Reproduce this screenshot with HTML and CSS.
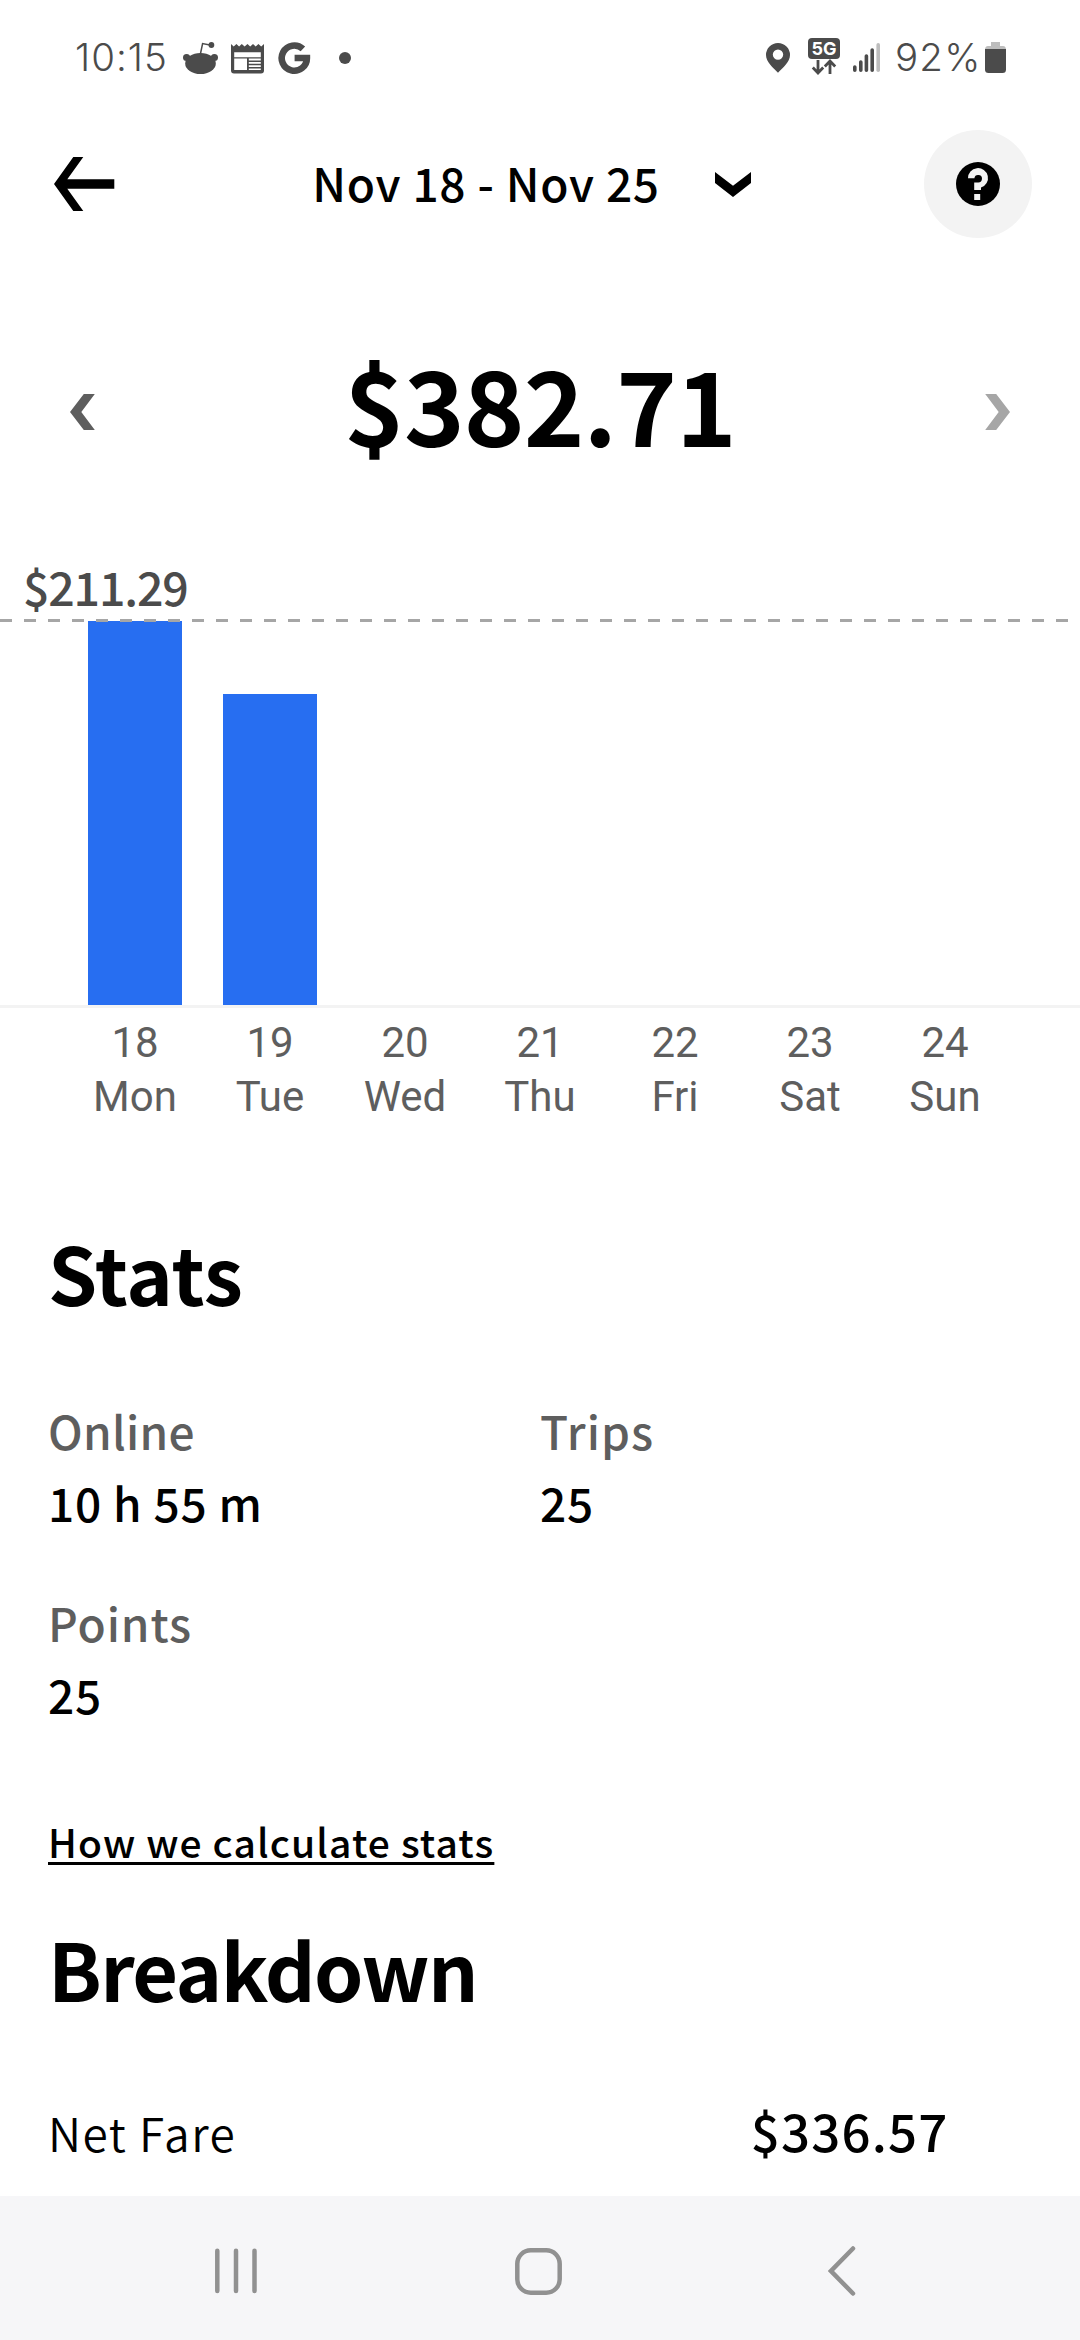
FILE: index.html
```html
<!DOCTYPE html>
<html lang="en">
<head>
<meta charset="utf-8">
<title>Earnings</title>
<link rel="stylesheet" href="styles.css">
</head>
<body>
<div class="screen">
  <div class="status">
    <span class="clock">10:15</span>
    <svg class="ico-reddit" width="36" height="34" viewBox="0 0 36 34">
      <ellipse cx="17.5" cy="21.5" rx="15.3" ry="10.5"/>
      <circle cx="3.6" cy="15.5" r="3.6"/><circle cx="31.4" cy="15.5" r="3.6"/>
      <circle cx="28.4" cy="3" r="2.9"/>
      <path class="line" d="M17.4 12 19.6 1.6 28 3.2"/>
    </svg>
    <svg class="ico-news" width="33" height="30" viewBox="0 0 33 30">
      <path fill-rule="evenodd" d="M0 0 2.7 2.6 5.4 0 8.1 2.6 10.8 0 13.6 2.6 16.5 0 19.2 2.6 22 0 24.7 2.6 27.4 0 30.2 2.6 33 0V26.5Q33 29.5 30 29.5H3Q0 29.5 0 26.5ZM3.2 8.2V13.2H29.8V8.2ZM3.2 14.6V26H16V14.6ZM17.8 14.6V16.4H29.8V14.6ZM17.8 18V19.8H29.8V18ZM17.8 21.2V23H29.8V21.2ZM17.8 24.4V26H29.8V24.4Z"/>
    </svg>
    <svg class="ico-g" width="33" height="34" viewBox="0 0 33 34">
      <path d="M24.9 7.9A12.6 12.6 0 1 0 28.9 17H16.6"/>
    </svg>
    <span class="dot"></span>
    <svg class="ico-pin" width="24" height="30" viewBox="0 0 24 30">
      <path fill-rule="evenodd" d="M12 0A12 12 0 0 1 24 12C24 19 17 24.5 12 29.8 7 24.5 0 19 0 12A12 12 0 0 1 12 0ZM12 6.4A5.2 5.2 0 1 0 12 16.8 5.2 5.2 0 1 0 12 6.4Z"/>
    </svg>
    <svg class="ico-5g" width="32" height="37" viewBox="0 0 32 37">
      <rect width="32" height="21" rx="4"/>
      <text x="16" y="17.2" text-anchor="middle">5G</text>
      <path d="M10 22V34.5M4.8 29.5 10 35 15.2 29.5M22 36V23.5M16.8 28.5 22 23 27.2 28.5"/>
    </svg>
    <svg class="ico-signal" width="27" height="30" viewBox="0 0 27 30">
      <path d="M1.8 24V27.2M7.8 19V27.2M13.4 13V27.2M19.2 7V27.2"/><path class="dim" d="M25.2 1.8V27.2"/>
    </svg>
    <span class="percent">92%</span>
    <svg class="ico-battery" width="21" height="31" viewBox="0 0 21 31">
      <path class="dim" d="M6 0H15V4H18Q21 4 21 8H0Q0 4 3 4H6Z"/><path d="M0 7H21V27.5Q21 31 17.5 31H3.5Q0 31 0 27.5Z"/>
    </svg>
  </div>

  <div class="header">
    <svg class="back" width="61" height="54" viewBox="0 0 61 54">
      <path d="M19.3 0H29.3L13.3 22.3H60.3V31.7H13.3L29.3 54H19.3L0 27Z"/>
    </svg>
    <h1 class="range">Nov 18 - Nov 25</h1>
    <svg class="drop" width="36" height="25" viewBox="0 0 36 25"><path d="M0 0 18 13.7 36 0V11L18 25 0 11Z"/></svg>
    <div class="help">
      <svg width="44" height="44" viewBox="0 0 44 44">
        <circle cx="22" cy="22" r="22"/>
        <path class="q" d="M12 16.3A10 10 0 1 1 25 25.6V28H18.2V20.5H22.2A3.8 3.8 0 1 0 18.4 16.3ZM18.2 32H24.2V38H18.2Z"/>
      </svg>
    </div>
  </div>

  <div class="total">
    <svg width="25" height="36" viewBox="0 0 25 36"><path d="M13.8 0H24.8L11.3 18 24.8 36H13.8L0 18Z"/></svg>
    <div class="amount">$382.71</div>
    <svg class="off" width="25" height="36" viewBox="0 0 25 36"><path d="M11.2 0H.2L13.7 18 .2 36H11.2L25 18Z"/></svg>
  </div>

  <div class="chart">
    <div class="peak">$211.29</div>
    <div class="plot">
      <div class="bar" style="height:384px"></div>
      <div class="bar" style="height:311.5px"></div>
      <div class="limit"></div>
    </div>
    <div class="axis">
      <div>18<br>Mon</div><div>19<br>Tue</div><div>20<br>Wed</div><div>21<br>Thu</div><div>22<br>Fri</div><div>23<br>Sat</div><div>24<br>Sun</div>
    </div>
  </div>

  <div class="content">
    <h2 class="h-stats">Stats</h2>
    <div class="stats">
      <div class="stat"><span class="label l-online">Online</span><span class="value">10 h 55 m</span></div>
      <div class="stat"><span class="label l-trips">Trips</span><span class="value">25</span></div>
      <div class="stat"><span class="label l-points">Points</span><span class="value">25</span></div>
    </div>
    <a class="link">How we calculate stats</a>
    <h2 class="h-break">Breakdown</h2>
    <div class="row"><span class="name">Net Fare</span><span class="sum">$336.57</span></div>
  </div>

  <div class="nav">
    <svg width="42" height="46" viewBox="0 0 42 46"><path d="M2.3 2.8V43M21 2.8V43M39.5 2.8V43"/></svg>
    <svg width="47" height="47" viewBox="0 0 47 47"><rect x="2.3" y="2.3" width="42.4" height="42.4" rx="13.5"/></svg>
    <svg width="28" height="50" viewBox="0 0 28 50"><path d="M25 2.5 3 25 25 47.5"/></svg>
  </div>
</div>
</body>
</html>
```
FILE: styles.css
```css
* { box-sizing: border-box; }
body { margin: 0; background: #fff; }
svg { display: block; flex: none; }
h1, h2 { margin: 0; }

.screen {
  width: 1080px;
  height: 2340px;
  display: flex;
  flex-direction: column;
  overflow: hidden;
  color: #000;
  background: #fff;
  font-family: "Noto Sans CJK JP", "Noto Sans", sans-serif;
  font-weight: 500;
  white-space: nowrap;
}

/* system status bar */
.status {
  height: 110px;
  flex: none;
  display: flex;
  align-items: flex-start;
  padding-left: 75px;
  color: #4b4b4b;
  fill: #4b4b4b;
  font-family: Inter, sans-serif;
  font-weight: 350;
}
.clock, .percent { font-size: 38.5px; line-height: 46px; margin-top: 34px; }
.clock { width: 108px; letter-spacing: 1px; }
.percent { width: 90px; margin-left: 15px; letter-spacing: 1.2px; }
.ico-reddit { margin-top: 42px; }
.ico-reddit .line { fill: none; stroke: #4b4b4b; stroke-width: 1.5; }
.ico-news { margin: 44px 0 0 12px; }
.ico-g { margin: 41px 0 0 14px; fill: none; stroke: #4b4b4b; stroke-width: 6.6; }
.dot { width: 12px; height: 12px; margin: 52px 0 0 28px; border-radius: 50%; background: #4b4b4b; }
.ico-pin { margin: 43px 0 0 415px; }
.ico-5g { margin: 38px 0 0 18px; }
.ico-5g text { font: 700 18px Inter, sans-serif; fill: #fff; }
.ico-5g path { fill: none; stroke: #4b4b4b; stroke-width: 2.8; }
.ico-signal { margin: 43px 0 0 13px; fill: none; stroke: #4b4b4b; stroke-width: 3.6; stroke-linecap: round; }
.ico-signal .dim { stroke: #bdbdbd; }
.ico-battery { margin-top: 42px; }
.ico-battery .dim { fill: #bdbdbd; }

/* date range header */
.header { height: 148px; flex: none; display: flex; align-items: center; padding-left: 53.7px; }
.range {
  width: 350px;
  margin: 0 0 4px 197.5px;
  font-size: 46px;
  font-weight: 500;
  line-height: 60px;
  letter-spacing: .75px;
}
.drop { margin-left: 52.5px; }
.help {
  width: 108px;
  height: 108px;
  margin-left: 173px;
  display: flex;
  align-items: center;
  justify-content: center;
  border-radius: 50%;
  background: #f3f3f3;
}
.help .q { fill: #f3f3f3; }

/* weekly total */
.total {
  height: 290px;
  flex: none;
  display: flex;
  align-items: center;
  justify-content: space-between;
  padding: 0 69.5px;
}
.total svg { margin-top: 18px; fill: #5e5e5e; }
.total .off { fill: #a6a6a6; }
.amount { font-size: 103px; font-weight: 700; line-height: 120px; letter-spacing: -.9px; }

/* daily chart */
.chart { flex: none; }
.peak {
  padding: 8px 0 0 23px;
  height: 71px;
  font-size: 46.5px;
  line-height: 60px;
  letter-spacing: -1.2px;
  color: #4b4b4b;
}
.plot {
  position: relative;
  height: 389px;
  display: grid;
  grid-template-columns: repeat(7, 135px);
  align-items: end;
  justify-items: center;
  padding: 0 67.5px;
  border-bottom: 3px solid #f3f3f3;
}
.bar { width: 94.5px; background: #276ef1; }
.limit {
  position: absolute;
  inset: 0 0 auto 0;
  height: 3px;
  background: repeating-linear-gradient(90deg, #a6a6a6 0 12px, transparent 12px 24px);
}
.axis {
  display: grid;
  grid-template-columns: repeat(7, 135px);
  padding: 8px 67.5px 0;
  font: 400 42px/54px Roboto, sans-serif;
  text-align: center;
  color: #5e5e5e;
}

/* stats and breakdown */
.content { flex: 1; min-height: 0; padding: 100px 48px 0; }
h2 { font-size: 79px; font-weight: 700; line-height: 96px; }
.h-break { margin-top: 54px; letter-spacing: -1.5px; }
.stats {
  display: grid;
  grid-template-columns: 492px 1fr;
  row-gap: 60px;
  margin-top: 80px;
  font-size: 46px;
  line-height: 60px;
}
.stat { display: grid; row-gap: 12px; }
.label { color: #5e5e5e; letter-spacing: .9px; }
.l-online { letter-spacing: .3px; }
.l-trips { letter-spacing: 1.1px; }
.value { letter-spacing: .75px; }
.link {
  display: block;
  width: max-content;
  margin-top: 92px;
  font-size: 39px;
  line-height: 50px;
  letter-spacing: 1.12px;
  text-decoration: underline 2.5px;
  text-underline-offset: 4px;
  text-decoration-skip-ink: none;
}
.row { display: flex; justify-content: space-between; margin-top: 86px; padding-right: 83.5px; line-height: 60px; }
.name { font-size: 46px; font-weight: 350; letter-spacing: 1.5px; }
.sum { font-size: 51px; line-height: 56px; letter-spacing: 1.15px; }

/* system navigation */
.nav {
  height: 144px;
  flex: none;
  display: flex;
  align-items: center;
  padding: 6px 0 0 215px;
  background: #f6f6f8;
  fill: none;
  stroke: #919191;
  stroke-width: 4.5;
  stroke-linecap: round;
}
.nav svg:nth-child(2) { margin-left: 257.5px; }
.nav svg:nth-child(3) { margin-left: 266px; }
```
